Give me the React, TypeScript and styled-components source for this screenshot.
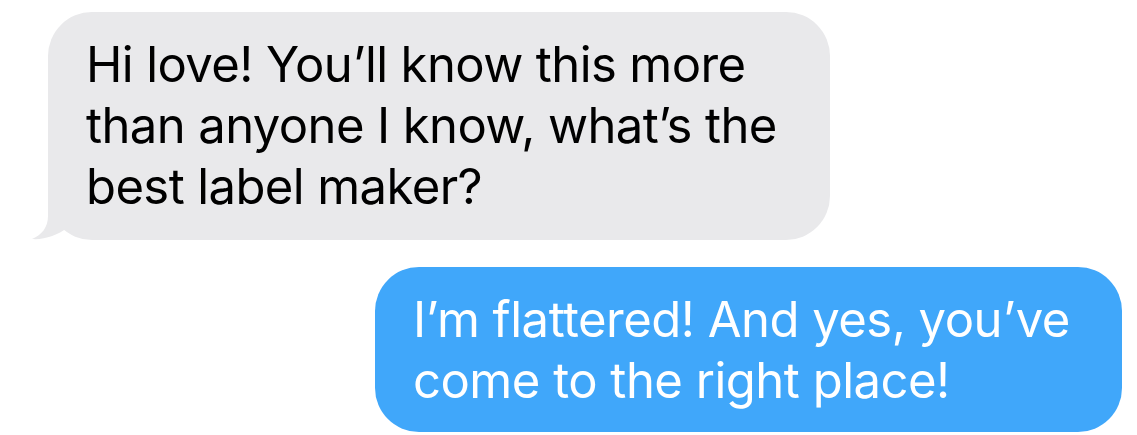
import React from "react";
import styled, { createGlobalStyle } from "styled-components";

const Global = createGlobalStyle`
  html, body { margin: 0; padding: 0; background: #ffffff; }
  body { font-family: Inter, "Noto Sans", sans-serif; -webkit-font-smoothing: antialiased; }
`;

const Thread = styled.div`
  width: 1137px;
  height: 435px;
  box-sizing: border-box;
  padding: 12px 15px 0 48px;
  display: flex;
  flex-direction: column;
  gap: 27px;
  overflow: hidden;
`;

const Bubble = styled.div<{ $me?: boolean }>`
  position: relative;
  box-sizing: border-box;
  align-self: ${(p) => (p.$me ? "flex-end" : "flex-start")};
  width: ${(p) => (p.$me ? "747px" : "782px")};
  height: ${(p) => (p.$me ? "165px" : "228px")};
  padding: 22px 0 0 38px;
  border-radius: 44px;
  background: ${(p) => (p.$me ? "#40a7fa" : "#e9e9eb")};
  color: ${(p) => (p.$me ? "#ffffff" : "#000000")};
  font-size: 49px;
  line-height: 61px;
  letter-spacing: ${(p) => (p.$me ? "-0.5px" : "-0.6px")};
  white-space: pre-line;
`;

const Tail = styled.svg`
  position: absolute;
  left: -16px;
  bottom: 0;
  width: 60px;
  height: 46px;
`;

export default function App() {
  return (
    <>
      <Global />
      <Thread>
        <Bubble>
          {"Hi love! You’ll know this more\nthan anyone I know, what’s the\nbest label maker?"}
          <Tail viewBox="0 0 60 46" aria-hidden="true">
            <path
              d="M16 0 L16 22 C16 33 10 41 0 45 C12 46 26 41 35 34 C40 39 46 43 53 45 L53 0 Z"
              fill="#e9e9eb"
            />
          </Tail>
        </Bubble>
        <Bubble $me>{"I’m flattered! And yes, you’ve\ncome to the right place!"}</Bubble>
      </Thread>
    </>
  );
}
